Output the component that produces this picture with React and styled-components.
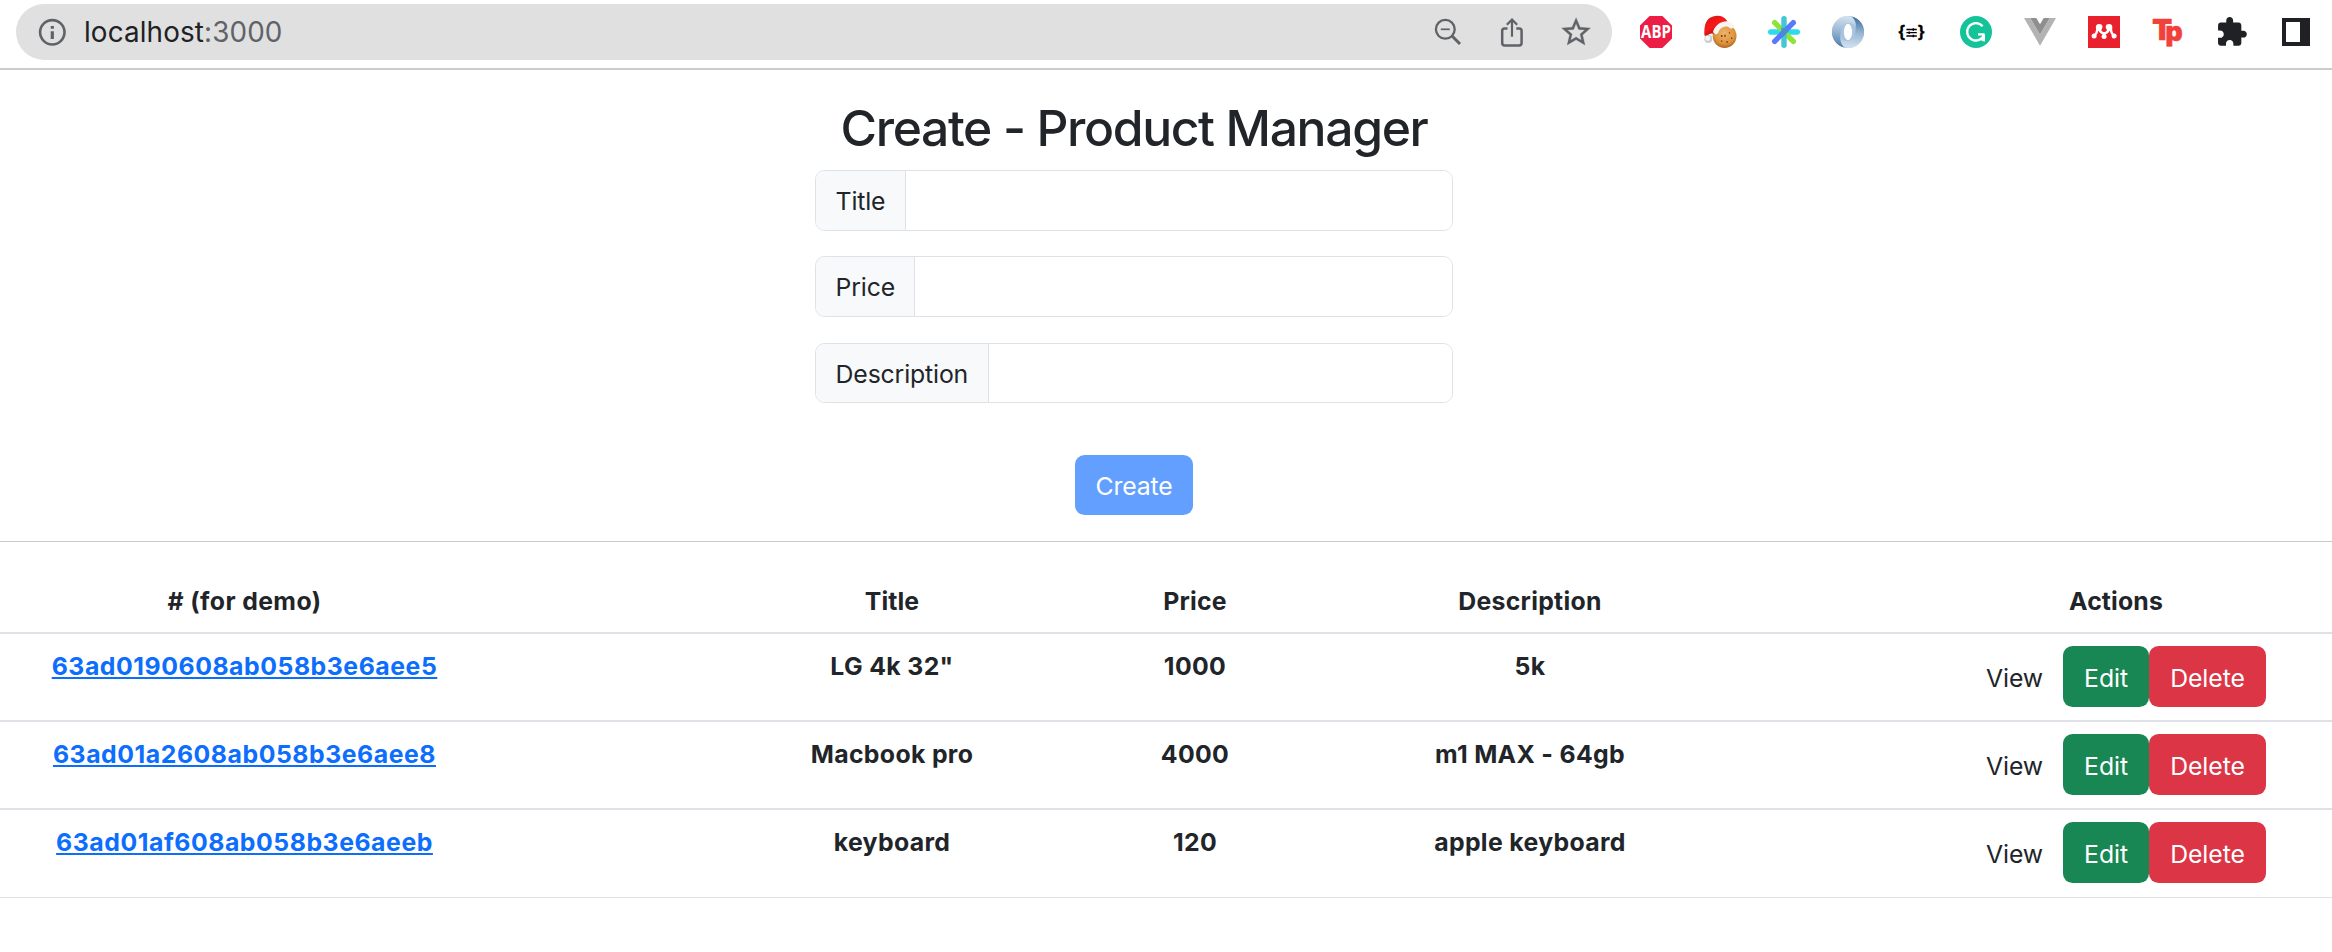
import React from "react";
import styled, { createGlobalStyle } from "styled-components";

const GlobalStyle = createGlobalStyle`
  *, *::before, *::after { box-sizing: border-box; }
  body {
    margin: 0;
    background: #fff;
    color: #212529;
    font-family: Inter, "Liberation Sans", sans-serif;
    font-size: 24.8px;
    line-height: 38.4px;
    letter-spacing: -0.15px;
  }
`;

const Toolbar = styled.header`
  display: flex;
  align-items: center;
  gap: 28px;
  height: 70px;
  padding: 4px 20px 8px 16px;
  border-bottom: 2px solid #cbcccd;
`;

const AddressBar = styled.div`
  display: flex;
  align-items: center;
  width: 1596px;
  height: 56px;
  padding: 0 20px;
  border-radius: 28px;
  background: #e0e0e0;
`;

const Address = styled.span`
  flex: 1;
  padding-left: 16px;
  font-size: 27.8px;
  line-height: 32px;
  letter-spacing: 0.14px;
  color: #202124;
`;

const Port = styled.span`
  color: #5f6368;
`;

const IconRow = styled.div`
  display: flex;
  gap: 32px;
`;

const Icon = styled.svg`
  display: block;
  flex: none;
  width: 32px;
  height: 32px;
  overflow: visible;
  letter-spacing: 0;
`;

const FormSection = styled.section`
  display: flex;
  flex-direction: column;
  align-items: center;
  width: 2268px;
  padding-top: 28px;
`;

const Heading = styled.h1`
  margin: 0 0 10.4px;
  font-size: 49.8px;
  font-weight: 500;
  line-height: 61.4px;
  letter-spacing: -1.36px;
`;

const InputGroup = styled.label`
  display: flex;
  width: 638px;
  height: 60.8px;
  margin-bottom: 25.6px;
  border: 1px solid #dee2e6;
  border-radius: 9.6px;
  overflow: hidden;
`;

const InputLabel = styled.span`
  flex: none;
  width: ${(p) => p.$width}px;
  padding: 11px 0 0 19.6px;
  border-right: 1px solid #dee2e6;
  background: #f8f9fa;
`;

const Input = styled.input`
  flex: 1;
  min-width: 0;
  padding: 0 19px;
  border: 0;
  outline: 0;
  background: #fff;
  font: inherit;
`;

const Button = styled.button`
  width: ${(p) => p.$width}px;
  height: 60.8px;
  padding: 2px 0 0;
  border: 0;
  border-radius: 9.6px;
  background: ${(p) => p.$bg || "transparent"};
  color: ${(p) => (p.$bg ? "#fff" : "#212529")};
  font: inherit;
  letter-spacing: inherit;
`;

const SubmitButton = styled(Button)`
  margin-top: 25.6px;
`;

const RowButton = styled(Button)`
  padding-top: 3.4px;
`;

const Divider = styled.hr`
  width: 100%;
  height: 1px;
  margin: 25.4px 0 25.6px;
  border: 0;
  background: #c8cacb;
`;

const Table = styled.table`
  width: 2332px;
  table-layout: fixed;
  border-collapse: separate;
  border-spacing: 0;
  text-align: center;
`;

const HeadCell = styled.th`
  width: ${(p) => p.$width}px;
  height: 66.4px;
  padding: 14.4px ${(p) => p.$right || 0}px 11.2px ${(p) => p.$left || 0}px;
  border-bottom: 2px solid #dee2e6;
  font-weight: 700;
  letter-spacing: ${(p) => p.$tracking}px;
`;

const Cell = styled.td`
  height: 88px;
  padding: 12.8px ${(p) => p.$right || 0}px 12.4px ${(p) => p.$left || 0}px;
  border-bottom: ${(p) => (p.$last ? 1 : 2)}px solid #dee2e6;
  font-weight: 700;
  letter-spacing: 0.35px;
  vertical-align: top;
`;

const ProductLink = styled.a`
  color: #0d6efd;
  letter-spacing: 0.55px;
  text-decoration: underline;
  text-decoration-thickness: 2px;
  text-underline-offset: 2px;
`;

const Actions = styled.div`
  display: flex;
  justify-content: center;
  margin-top: -0.8px;
  font-weight: 400;
  letter-spacing: -0.1px;
`;

const InfoIcon = () => (
  <Icon viewBox="0 0 32 32">
    <circle cx="16.3" cy="16.3" r="12.2" fill="none" stroke="#5f6368" strokeWidth="2.6" />
    <path d="M14.7 10h3.2v2.8h-3.2zM14.7 15.2h3.2V23h-3.2z" fill="#5f6368" />
  </Icon>
);

const ZoomOutIcon = () => (
  <Icon viewBox="0 0 32 32" fill="none" stroke="#5f6368">
    <circle cx="13.3" cy="13.3" r="9.4" strokeWidth="2.3" />
    <path d="M8.8 13.3h9" strokeWidth="1.7" />
    <path d="M19.8 19.8l8.2 8.2" strokeWidth="3" />
  </Icon>
);

const ShareIcon = () => (
  <Icon viewBox="0 0 32 32" fill="none" stroke="#5f6368" strokeWidth="2.5">
    <path d="M11.5 12.4H8.6q-2.4 0-2.4 2.4v12.3q0 2.4 2.4 2.4h14.6q2.4 0 2.4-2.4V14.8q0-2.4-2.4-2.4h-2.9" />
    <path d="M16 20.7V4M10.8 8.8L16 3.6l5.2 5.2" strokeWidth="2.2" />
  </Icon>
);

const StarIcon = () => (
  <Icon viewBox="0 0 32 32">
    <path
      transform="translate(-1.2 -1.2) scale(1.44)"
      fill="#5f6368"
      stroke="#5f6368"
      strokeWidth="0.2"
      d="M22 9.24l-7.19-.62L12 2 9.19 8.63 2 9.24l5.46 4.73L5.82 21 12 17.27 18.18 21l-1.63-7.03L22 9.24zM12 15.4l-3.76 2.27 1-4.28-3.32-2.88 4.38-.38L12 6.1l1.71 4.04 4.38.38-3.32 2.88 1 4.28L12 15.4z"
    />
  </Icon>
);

const AdblockIcon = () => (
  <Icon viewBox="0 0 32 32">
    <path d="M9.6 0h12.8L32 9.6v12.8L22.4 32H9.6L0 22.4V9.6z" fill="#ed1e45" />
    <text transform="translate(16 22) scale(.88 1)" textAnchor="middle" fontFamily="Open Sans, sans-serif" fontWeight="700" fontSize="17" fill="#fff">
      ABP
    </text>
  </Icon>
);

const CookieIcon = () => (
  <Icon viewBox="0 0 32 32">
    <defs>
      <radialGradient id="cookie" cx="0.5" cy="0.4" r="0.62">
        <stop offset="0" stopColor="#f0b46a" />
        <stop offset="0.7" stopColor="#dc913c" />
        <stop offset="1" stopColor="#a9601f" />
      </radialGradient>
      <linearGradient id="hat" x1="0" y1="0" x2="0.7" y2="1">
        <stop offset="0" stopColor="#d81010" />
        <stop offset="0.5" stopColor="#f81a1a" />
        <stop offset="1" stopColor="#8e0b0b" />
      </linearGradient>
    </defs>
    <circle cx="20.6" cy="20" r="11.9" fill="url(#cookie)" />
    <path d="M17 19h1.400v2H17zM20.300 18.800h1.400v1.900h-1.400zM17 24.400h1.300v1.300H17zM22.300 25.200h1.500v1.500h-1.500zM27 21.500h1.200v1.600H27zM24.900 16.200h1.200v1.400h-1.200z" fill="#6b3b18" />
    <path d="M.4 19.500C-.2 9 2 2.400 9 .4c6-1.400 11-.4 14.500 5L11.500 18C7 16.500 4 18 3.600 20.500z" fill="url(#hat)" />
    <path d="M11.8 15.500Q14 10 19 8.400Q24 6.600 27.200 9.800" fill="none" stroke="#f7f4f2" strokeWidth="5.200" strokeLinecap="round" />
    <circle cx="4.300" cy="23" r="4" fill="#c9ccd1" />
    <circle cx="3.700" cy="22.200" r="2.500" fill="#f4f5f6" />
  </Icon>
);

const AsteriskIcon = () => (
  <Icon viewBox="0 0 32 32" fill="none" strokeWidth="5.4" strokeLinecap="round">
    <path d="M2.7 16h26.6" stroke="#2bdcf0" />
    <path d="M6.7 6.7l18.6 18.6" stroke="#8fe337" />
    <path d="M16 2.7v26.6" stroke="#45c6d5" />
    <path d="M25.3 6.7L6.7 25.3" stroke="#5c78fa" />
    <path d="M16 12v5" stroke="#4796cf" strokeLinecap="butt" />
    <path d="M19 13l-6 6" stroke="#4a8bd5" strokeLinecap="butt" />
  </Icon>
);

const SwirlIcon = () => (
  <Icon viewBox="0 0 32 32">
    <defs>
      <linearGradient id="swirlA" x1="0.5" y1="0" x2="0.4" y2="1">
        <stop offset="0" stopColor="#d3e3f1" />
        <stop offset="0.5" stopColor="#98b6d3" />
        <stop offset="1" stopColor="#4f7dac" />
      </linearGradient>
      <linearGradient id="swirlB" x1="0.5" y1="0" x2="0.4" y2="1">
        <stop offset="0" stopColor="#3f6f9f" />
        <stop offset="0.5" stopColor="#98b6d3" />
        <stop offset="1" stopColor="#d3e3f1" />
      </linearGradient>
    </defs>
    <circle cx="16" cy="16" r="16" fill="#a9c4de" />
    <path d="M20 .5A16 16 0 0 1 18 31.900C11 32 7.500 27 8.500 21.500C12 27 20 26 22.500 19C25 11 24 5 20 .5z" fill="url(#swirlB)" />
    <path d="M12 31.500A16 16 0 0 1 14 .1C21 0 24.500 5 23.500 10.500C20 5 12 6 9.500 13C7 21 8 27 12 31.500z" fill="url(#swirlA)" />
    <ellipse cx="16" cy="16" rx="4.100" ry="8.300" fill="#fff" />
  </Icon>
);

const BracesIcon = () => (
  <Icon viewBox="0 0 32 32">
    <g fontFamily="Liberation Sans, sans-serif" fontWeight="700" fontSize="16.5" fill="#000" stroke="#000" strokeWidth="0.4">
      <text x="2.4" y="21.3">{"{"}</text>
      <text x="22" y="21.3">{"}"}</text>
    </g>
    <path d="M10.400 13.500h10.400M10.400 16.700h10.400M10.400 20h10.400" stroke="#000" strokeWidth="1.300" />
    <path d="M17.300 12.200v2.600M13.200 15.400v2.600M17.300 18.700v2.600" stroke="#000" strokeWidth="1.400" />
  </Icon>
);

const GrammarIcon = () => (
  <Icon viewBox="0 0 32 32">
    <circle cx="16" cy="16" r="16" fill="#15c39a" />
    <path d="M22.600 10.200A8.700 8.700 0 1 0 24.200 18.400M18 18.400h6.500M23.800 18.400v6.800" fill="none" stroke="#fff" strokeWidth="2.300" />
    <path d="M20.500 24.300l4.400-4.300v5.500z" fill="#fff" />
  </Icon>
);

const VueIcon = () => (
  <Icon viewBox="0 0 32 32">
    <path d="M0 2h6.300L16 18.500 25.700 2H32L16 29.700z" fill="#b3b3b3" />
    <path d="M6.300 2h6L16 8.300 19.700 2h6L16 18.500z" fill="#8f8f8f" />
  </Icon>
);

const MendeleyIcon = () => (
  <Icon viewBox="0 0 32 32">
    <path d="M0 0h32v32H0z" fill="#e9212e" />
    <path d="M6.200 19.500Q9.400 17.500 9.300 12M26 19.500Q22.800 17.500 22.900 12M16.100 16.500v4" fill="none" stroke="#fff" strokeWidth="2.400" />
    <path d="M11 13Q13 17.300 16.100 17.300Q19.200 17.300 21.200 13" fill="none" stroke="#fff" strokeWidth="2.800" />
    <g fill="#fff">
      <circle cx="11.200" cy="11.300" r="3.300" />
      <circle cx="21" cy="11.300" r="3.300" />
      <circle cx="6.100" cy="20" r="2.500" />
      <circle cx="16.100" cy="20.600" r="2.500" />
      <circle cx="26.100" cy="20" r="2.500" />
    </g>
    <circle cx="16.100" cy="13.600" r="2.400" fill="#e9212e" />
  </Icon>
);

const TpIcon = () => (
  <Icon viewBox="0 0 32 32" fontFamily="Inter, sans-serif" fontWeight="900" fill="#f24139" stroke="#f24139">
    <text x="0.3" y="23.6" fontSize="29" strokeWidth="0.6">T</text>
    <text x="13.6" y="25" fontSize="26.5" strokeWidth="0.6">p</text>
  </Icon>
);

const PuzzleIcon = () => (
  <Icon viewBox="0 0 32 32">
    <path
      transform="translate(-.7 -.36) scale(1.37)"
      fill="#202124"
      d="M20.5 11H19V7c0-1.1-.9-2-2-2h-4V3.5C13 2.12 11.88 1 10.5 1S8 2.12 8 3.5V5H4c-1.1 0-1.99.9-1.99 2v3.8H3.5c1.49 0 2.7 1.21 2.7 2.7s-1.21 2.7-2.7 2.7H2V20c0 1.1.9 2 2 2h3.8v-1.5c0-1.49 1.21-2.7 2.7-2.7 1.49 0 2.7 1.21 2.7 2.7V22H17c1.1 0 2-.9 2-2v-4h1.5c1.38 0 2.5-1.12 2.5-2.5S21.88 11 20.5 11z"
    />
  </Icon>
);

const SidePanelIcon = () => (
  <Icon viewBox="0 0 32 32">
    <path d="M2 2h28v28H2zM6 6v20h14V6z" fill="#202124" fillRule="evenodd" />
  </Icon>
);

const fields = [
  { label: "Title", width: 90 },
  { label: "Price", width: 99 },
  { label: "Description", width: 173 },
];

const columns = [
  { label: "# (for demo)", width: 741, right: 252, tracking: 0.4 },
  { label: "Title", width: 302, tracking: 0.1 },
  { label: "Price", width: 304, tracking: 0.2 },
  { label: "Description", width: 366, tracking: 0.3 },
  { label: "Actions", width: 619, left: 187, tracking: 0.15 },
];

const products = [
  { id: "63ad0190608ab058b3e6aee5", title: 'LG 4k 32"', price: 1000, description: "5k" },
  { id: "63ad01a2608ab058b3e6aee8", title: "Macbook pro", price: 4000, description: "m1 MAX - 64gb" },
  { id: "63ad01af608ab058b3e6aeeb", title: "keyboard", price: 120, description: "apple keyboard" },
];

export default function App() {
  return (
    <>
      <GlobalStyle />
      <Toolbar>
        <AddressBar>
          <InfoIcon />
          <Address>
            localhost<Port>:3000</Port>
          </Address>
          <IconRow>
            <ZoomOutIcon />
            <ShareIcon />
            <StarIcon />
          </IconRow>
        </AddressBar>
        <IconRow>
          <AdblockIcon />
          <CookieIcon />
          <AsteriskIcon />
          <SwirlIcon />
          <BracesIcon />
          <GrammarIcon />
          <VueIcon />
          <MendeleyIcon />
          <TpIcon />
          <PuzzleIcon />
          <SidePanelIcon />
        </IconRow>
      </Toolbar>
      <FormSection>
        <Heading>Create - Product Manager</Heading>
        {fields.map((f) => (
          <InputGroup key={f.label}>
            <InputLabel $width={f.width}>{f.label}</InputLabel>
            <Input />
          </InputGroup>
        ))}
        <SubmitButton $bg="#629fff" $width={118}>Create</SubmitButton>
      </FormSection>
      <Divider />
      <Table>
        <thead>
          <tr>
            {columns.map((c) => (
              <HeadCell key={c.label} $width={c.width} $left={c.left} $right={c.right} $tracking={c.tracking}>
                {c.label}
              </HeadCell>
            ))}
          </tr>
        </thead>
        <tbody>
          {products.map((p, i) => {
            const last = i === products.length - 1;
            return (
              <tr key={p.id}>
                <Cell $last={last} $right={252}>
                  <ProductLink href="#">{p.id}</ProductLink>
                </Cell>
                <Cell $last={last}>{p.title}</Cell>
                <Cell $last={last}>{p.price}</Cell>
                <Cell $last={last}>{p.description}</Cell>
                <Cell $last={last} $left={187}>
                  <Actions>
                    <RowButton $width={97}>View</RowButton>
                    <RowButton $bg="#198754" $width={86}>Edit</RowButton>
                    <RowButton $bg="#dc3545" $width={117}>Delete</RowButton>
                  </Actions>
                </Cell>
              </tr>
            );
          })}
        </tbody>
      </Table>
    </>
  );
}
